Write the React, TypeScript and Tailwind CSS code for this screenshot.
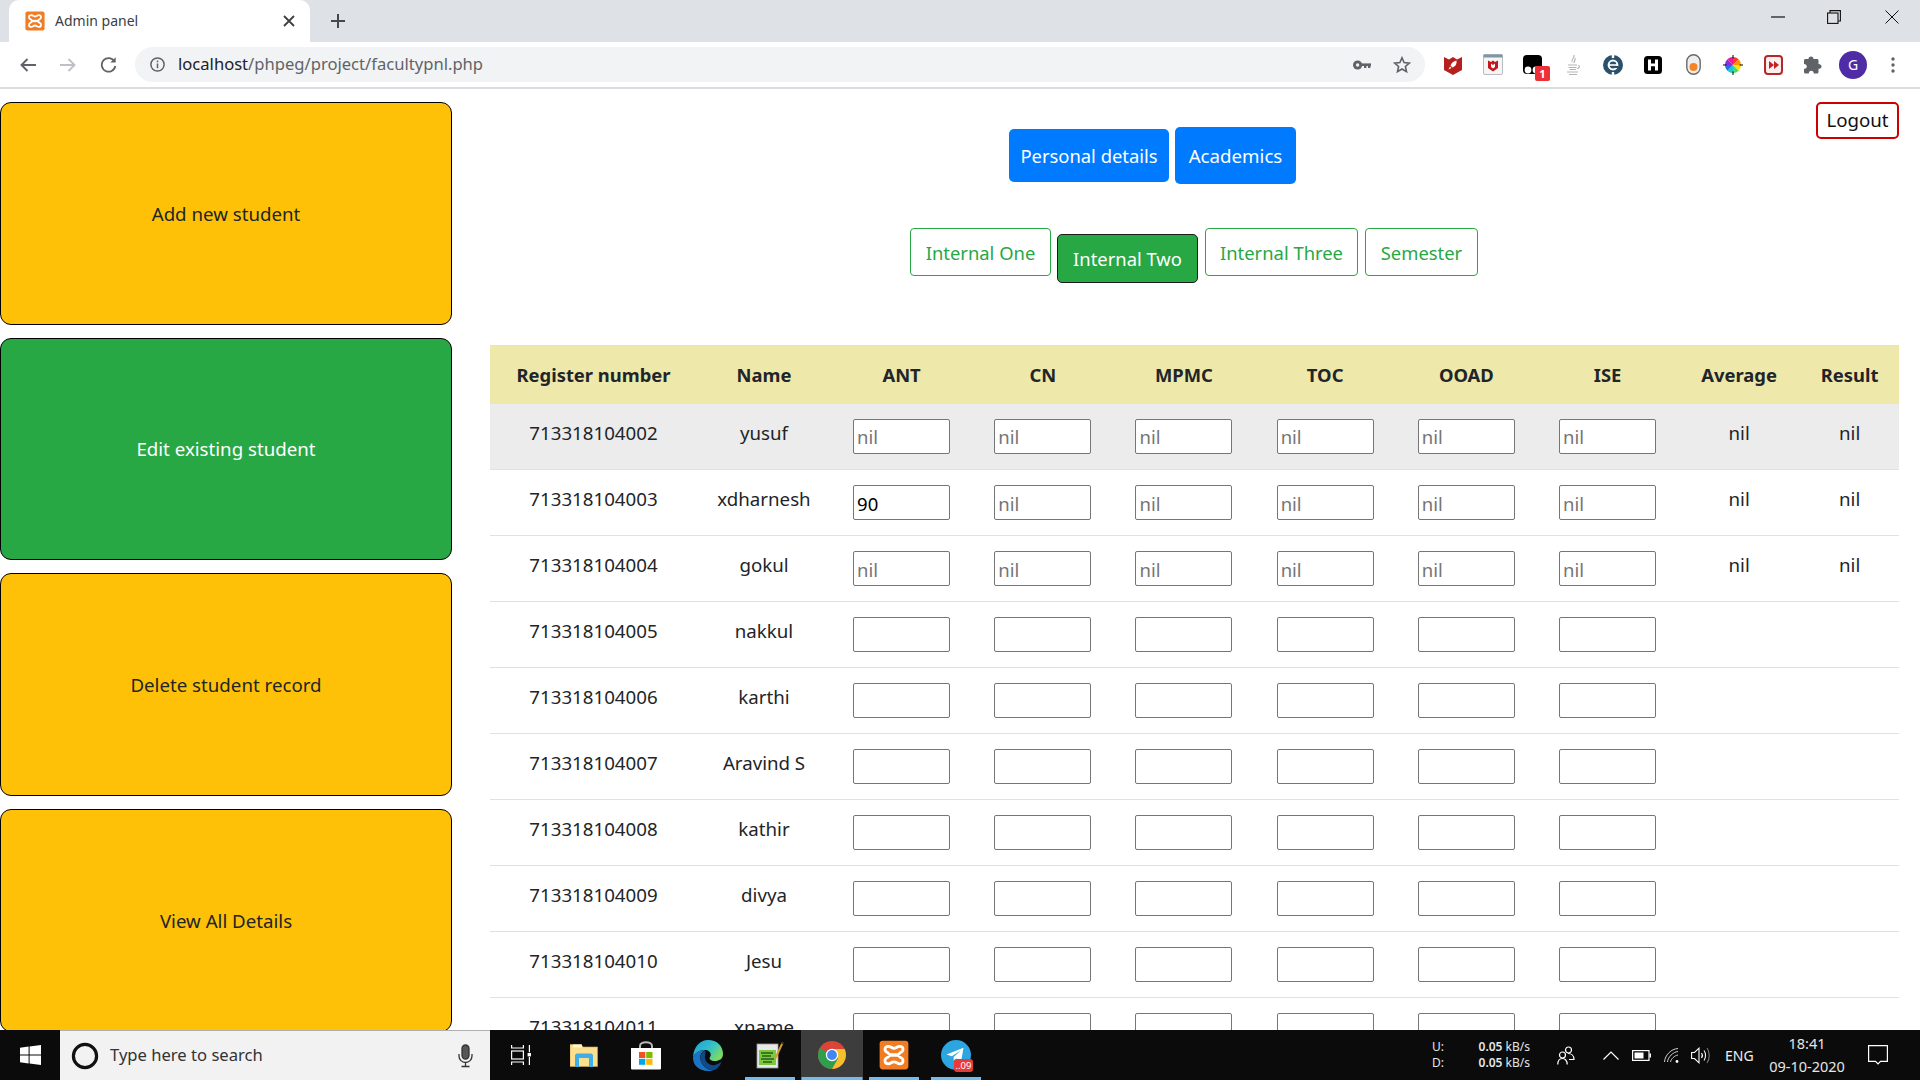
import React from "react";

const FONT = "[font-family:'Noto_Sans','Open_Sans',sans-serif]";

function Xampp({ size }: { size: number }) {
  return (
    <svg width={size} height={size} viewBox="0 0 24 24" className="block shrink-0">
      <rect x="0.5" y="0.5" width="23" height="23" rx="2.5" fill="#f27c22" />
      <path d="M7.5 5C9.5 5 10 6.6 12 6.6C14 6.6 14.5 5 16.5 5C20 5 20 9 17.2 10L15.2 12L17.2 14C20 15 20 19 16.5 19C14.5 19 14 17.4 12 17.4C10 17.4 9.5 19 7.5 19C4 19 4 15 6.8 14L8.8 12L6.8 10C4 9 4 5 7.5 5Z" fill="none" stroke="#fff" strokeWidth="2.2" />
      <rect x="8.5" y="10.6" width="7" height="2.8" fill="#fff" />
    </svg>
  );
}

function McAfee({ rocket }: { rocket?: boolean }) {
  return (
    <svg width="20" height="20" viewBox="0 0 20 20" className="block">
      <path d="M1 2L6 4.5L10 2L14 4.5L19 2V15L10 20L1 15Z" fill="#b5201f" />
      {rocket && <path d="M13.5 5.5C10.5 6 8.5 8 7.5 10.5L9.5 12.5C12 11.5 14 9.5 13.5 5.5ZM7 11.5L5.5 14.5L8.5 13Z" fill="#fff" />}
    </svg>
  );
}

const Ext: { key: string; node: React.ReactNode }[] = [
  { key: "m1", node: <McAfee rocket /> },
  {
    key: "m2",
    node: (
      <svg width="20" height="21" viewBox="0 0 20 21" className="block">
        <rect x="0.5" y="0.5" width="19" height="20" rx="1.5" fill="#f5f5f5" stroke="#b9bdc0" />
        <rect x="0.5" y="0.5" width="19" height="3" fill="#7f97a3" />
        <path d="M5 6.5L8 8L10 6.5L12 8L15 6.5V14L10 17.5L5 14Z" fill="#c4161c" />
        <path d="M8 9.5L10 11L12 9.5V13L10 14.5L8 13Z" fill="#fff" />
      </svg>
    ),
  },
  {
    key: "blk",
    node: (
      <div className="relative w-[20px] h-[20px]">
        <svg width="20" height="20" viewBox="0 0 20 20" className="block">
          <rect width="19" height="19" rx="4" fill="#000" />
          <circle cx="5" cy="15" r="3.4" fill="#fff" />
          <circle cx="13" cy="15" r="3.4" fill="#fff" />
        </svg>
        <div className={`absolute left-[12px] top-[11px] w-[15px] h-[15px] bg-[#ee2f37] rounded-[2px] text-white text-[11px] leading-[15px] font-bold text-center ${FONT}`}>1</div>
      </div>
    ),
  },
  {
    key: "java",
    node: (
      <svg width="16" height="22" viewBox="0 0 16 22" className="block" fill="none" stroke="#b5b5b5">
        <path d="M9 1C10 4 6 5 7 8M10 4C11 6 9 7 9 9" strokeWidth="1.2" />
        <path d="M3 11H12M3.5 13.5H11.5M4.5 15.5H11M13 11.5C15 11.5 15 14 12 14.5M2 18H13M4 20.5H12" strokeWidth="1.1" />
      </svg>
    ),
  },
  {
    key: "e",
    node: (
      <svg width="20" height="20" viewBox="0 0 20 20" className="block">
        <circle cx="10" cy="10" r="10" fill="#2b5069" />
        <rect x="8.8" y="0" width="2.4" height="3" fill="#fff" />
        <rect x="8.8" y="17" width="2.4" height="3" fill="#fff" />
        <circle cx="10" cy="10" r="4.4" fill="none" stroke="#fff" strokeWidth="2" />
        <rect x="6" y="9.2" width="8" height="1.6" fill="#fff" />
        <rect x="12" y="11" width="3" height="2" fill="#2b5069" />
      </svg>
    ),
  },
  {
    key: "H",
    node: (
      <svg width="18" height="18" viewBox="0 0 18 18" className="block">
        <rect width="18" height="18" rx="3.5" fill="#000" />
        <path d="M4 3.5H7V7.5H11V3.5H14V14.5H11V10.2H7V14.5H4Z" fill="#fff" />
      </svg>
    ),
  },
  {
    key: "toggle",
    node: (
      <svg width="15" height="21" viewBox="0 0 15 21" className="block">
        <rect x="0.8" y="0.8" width="13.4" height="19.4" rx="6.7" fill="#eeeeee" stroke="#6a6a6a" strokeWidth="1.4" />
        <circle cx="7.5" cy="13" r="4" fill="#f58426" />
      </svg>
    ),
  },
  {
    key: "wheel",
    node: (
      <svg width="20" height="20" viewBox="0 0 20 20" className="block">
        <path d="M10 10L10 2A8 8 0 0 1 15.66 4.34Z" fill="#ff3b30" />
        <path d="M10 10L15.66 4.34A8 8 0 0 1 18 10Z" fill="#ff9500" />
        <path d="M10 10L18 10A8 8 0 0 1 15.66 15.66Z" fill="#ffe600" />
        <path d="M10 10L15.66 15.66A8 8 0 0 1 10 18Z" fill="#4cd964" />
        <path d="M10 10L10 18A8 8 0 0 1 4.34 15.66Z" fill="#1cc8c8" />
        <path d="M10 10L4.34 15.66A8 8 0 0 1 2 10Z" fill="#1e6ff0" />
        <path d="M10 10L2 10A8 8 0 0 1 4.34 4.34Z" fill="#8a2be2" />
        <path d="M10 10L4.34 4.34A8 8 0 0 1 10 2Z" fill="#f0189a" />
        <path d="M10 0V3.5M10 16.5V20M0 10H3.5M16.5 10H20" stroke="#000" strokeWidth="1" />
      </svg>
    ),
  },
  {
    key: "ff",
    node: (
      <svg width="19" height="20" viewBox="0 0 19 20" className="block">
        <rect x="1" y="1" width="17" height="18" rx="3" fill="#fbeeee" stroke="#b4282a" strokeWidth="2" />
        <path d="M5 6L10 10L5 14ZM10 6L15 10L10 14Z" fill="#c0221f" />
      </svg>
    ),
  },
  {
    key: "puzzle",
    node: (
      <svg width="18" height="18" viewBox="0 0 18 18" className="block">
        <path d="M7 0.5C8.6 0.5 9.5 1.5 9.5 3H13C13.8 3 14.5 3.7 14.5 4.5V8C16.2 8 17.5 9 17.5 10.4C17.5 11.8 16.2 12.8 14.5 12.8V16C14.5 16.8 13.8 17.5 13 17.5H9.7C9.7 15.8 8.8 14.8 7.3 14.8C5.8 14.8 4.8 15.8 4.8 17.5H1.5C0.7 17.5 0 16.8 0 16V12.8C1.7 12.8 2.8 11.8 2.8 10.4C2.8 9 1.7 8 0 8V4.5C0 3.7 0.7 3 1.5 3H4.5C4.5 1.5 5.4 0.5 7 0.5Z" fill="#5f6368" />
      </svg>
    ),
  },
  {
    key: "avatar",
    node: <div className={`w-[28px] h-[28px] rounded-full bg-[#4f2ba6] text-white text-[14px] leading-[28px] text-center ${FONT}`}>G</div>,
  },
  {
    key: "dots",
    node: (
      <svg width="4" height="16" viewBox="0 0 4 16" className="block" fill="#5f6368">
        <circle cx="2" cy="2" r="1.7" />
        <circle cx="2" cy="8" r="1.7" />
        <circle cx="2" cy="14" r="1.7" />
      </svg>
    ),
  },
];

function BrowserChrome() {
  return (
    <div className="shrink-0">
      <div className="h-[42px] bg-[#dee1e6] flex items-end pl-[9px] relative">
        <div className="w-[301px] h-[42px] bg-white rounded-t-[10px] flex items-center pl-[16px] pr-[15px]">
          <Xampp size={20} />
          <span className={`ml-[10px] -mt-[2px] text-[14px] text-[#3c4043] ${FONT}`}>Admin panel</span>
          <svg width="12" height="12" viewBox="0 0 12 12" className="ml-auto" stroke="#3c4043" strokeWidth="1.8">
            <path d="M1 1L11 11M11 1L1 11" />
          </svg>
        </div>
        <svg width="16" height="16" viewBox="0 0 16 16" className="ml-[20px] mb-[13px]" stroke="#45494e" strokeWidth="2">
          <path d="M8 1V15M1 8H15" />
        </svg>
        <div className="ml-auto flex items-center h-[42px] pb-[8px]">
          <svg width="14" height="2" viewBox="0 0 14 2" className="mr-[42px]" stroke="#111" strokeWidth="1.2"><path d="M0 1H14" /></svg>
          <svg width="14" height="14" viewBox="0 0 14 14" className="mr-[44px]" fill="none" stroke="#111" strokeWidth="1.1">
            <rect x="0.6" y="3" width="10.4" height="10.4" />
            <path d="M3 3V0.6H13.4V11H11" />
          </svg>
          <svg width="14" height="14" viewBox="0 0 14 14" className="mr-[21px]" stroke="#111" strokeWidth="1"><path d="M0.5 0.5L13.5 13.5M13.5 0.5L0.5 13.5" /></svg>
        </div>
      </div>
      <div className="h-[45px] bg-white flex items-center pl-[8px]">
        <div className="w-[40px] flex justify-center">
          <svg width="16" height="14" viewBox="0 0 16 14" fill="none" stroke="#5f6368" strokeWidth="1.9"><path d="M16 7H2M7.5 1L1.5 7L7.5 13" /></svg>
        </div>
        <div className="w-[40px] flex justify-center">
          <svg width="16" height="14" viewBox="0 0 16 14" fill="none" stroke="#bdc0c4" strokeWidth="1.9"><path d="M0 7H14M8.5 1L14.5 7L8.5 13" /></svg>
        </div>
        <div className="w-[40px] flex justify-center">
          <svg width="17" height="17" viewBox="0 0 17 17" fill="none" stroke="#5f6368" strokeWidth="1.8">
            <path d="M14.5 5.5A6.8 6.8 0 1 0 15.3 10" />
            <path d="M15.7 1.2V6.6H10.3Z" fill="#5f6368" stroke="none" />
          </svg>
        </div>
        <div className="ml-[7px] w-[1290px] h-[35px] rounded-full bg-[#f1f3f4] flex items-center pl-[15px] pr-[14px]">
          <svg width="15" height="15" viewBox="0 0 15 15" fill="none" stroke="#5f6368" strokeWidth="1.5">
            <circle cx="7.5" cy="7.5" r="6.6" />
            <path d="M7.5 6.5V11.2M7.5 3.6V5.2" />
          </svg>
          <span className={`ml-[13px] text-[16.6px] ${FONT}`}>
            <span className="text-[#202124]">localhost</span>
            <span className="text-[#5f6368]">/phpeg/project/facultypnl.php</span>
          </span>
          <svg width="18" height="10" viewBox="0 0 18 10" className="ml-auto" fill="#5f6368">
            <circle cx="4.6" cy="5" r="4.6" />
            <rect x="8" y="3.4" width="10" height="2.6" />
            <rect x="11" y="5" width="2.4" height="3" />
            <rect x="15" y="5" width="2.4" height="3" />
            <circle cx="4.6" cy="5" r="1.7" fill="#f1f3f4" />
          </svg>
          <svg width="18" height="18" viewBox="0 0 18 18" className="ml-[22px]" fill="none" stroke="#5f6368" strokeWidth="1.6">
            <path d="M9 1.8L11.1 6.6L16.3 7.1L12.4 10.5L13.5 15.6L9 13L4.5 15.6L5.6 10.5L1.7 7.1L6.9 6.6Z" />
          </svg>
        </div>
        <div className="ml-[8px] flex items-center">
          {Ext.map((e) => (
            <div key={e.key} className="w-[40px] flex justify-center items-center">{e.node}</div>
          ))}
        </div>
      </div>
      <div className="h-[2px] bg-[#dadce0]" />
    </div>
  );
}

const sidebar = [
  { t: "Add new student", on: false },
  { t: "Edit existing student", on: true },
  { t: "Delete student record", on: false },
  { t: "View All Details", on: false },
];

const rows = [
  ["713318104002", "yusuf", "nil"],
  ["713318104003", "xdharnesh", "nil"],
  ["713318104004", "gokul", "nil"],
  ["713318104005", "nakkul", ""],
  ["713318104006", "karthi", ""],
  ["713318104007", "Aravind S", ""],
  ["713318104008", "kathir", ""],
  ["713318104009", "divya", ""],
  ["713318104010", "Jesu", ""],
  ["713318104011", "xname", ""],
];

const th = "font-bold text-[#212529] text-[18.4px] text-center align-middle p-0";
const td = "text-center align-top pt-[15px] text-[#212529] text-[18.7px]";

function MarksTable() {
  return (
    <table className="w-[1409.2px] table-fixed border-collapse">
      <thead>
        <tr className="h-[58px] bg-[#eee8aa] border-t border-[#dee2e6]">
          <th className={`${th} w-[207px]`}>Register number</th>
          <th className={`${th} w-[134px]`}>Name</th>
          <th className={`${th} w-[141.2px]`}>ANT</th>
          <th className={`${th} w-[141.2px]`}>CN</th>
          <th className={`${th} w-[141.2px]`}>MPMC</th>
          <th className={`${th} w-[141.2px]`}>TOC</th>
          <th className={`${th} w-[141.2px]`}>OOAD</th>
          <th className={`${th} w-[141.2px]`}>ISE</th>
          <th className={`${th} w-[122px]`}>Average</th>
          <th className={`${th} w-[99px]`}>Result</th>
        </tr>
      </thead>
      <tbody>
        {rows.map((r, i) => (
          <tr key={r[0]} className={`h-[66px] border-b border-[#dee2e6] ${i === 0 ? "bg-[#ececec]" : "bg-white"}`}>
            <td className={td}>{r[0]}</td>
            <td className={td}>{r[1]}</td>
            {[0, 1, 2, 3, 4, 5].map((c) => (
              <td key={c} className="align-top pt-[15px] text-center">
                <input
                  defaultValue={i === 1 && c === 0 ? "90" : ""}
                  placeholder={r[2]}
                  className={`w-[97px] h-[35px] bg-white border border-[#767676] rounded-[2px] pl-[3px] pt-[1px] text-[18.5px] text-black placeholder:text-[#757575] outline-none ${FONT}`}
                />
              </td>
            ))}
            <td className={td}>{r[2]}</td>
            <td className={td}>{r[2]}</td>
          </tr>
        ))}
      </tbody>
    </table>
  );
}

function Page() {
  return (
    <main className={`flex-1 min-h-0 overflow-hidden flex bg-white relative ${FONT}`}>
      <aside className="w-[452px] shrink-0 flex flex-col gap-[12.8px] pt-[13px]">
        {sidebar.map((s) => (
          <div
            key={s.t}
            className={`w-[452px] h-[222.8px] shrink-0 pt-[1px] rounded-[11px] border border-black flex items-center justify-center text-[18.7px] ${s.on ? "bg-[#28a745] text-white" : "bg-[#ffc107] text-[#212529]"}`}
          >
            {s.t}
          </div>
        ))}
      </aside>
      <section className="ml-[38px] w-[1411px] shrink-0">
        <div className="pt-[38px] pl-[519px] h-[95px] flex items-center">
          <div className="w-[160px] h-[53px] pt-[1px] bg-[#007bff] rounded-[5px] text-white text-[18.4px] flex items-center justify-center">Personal details</div>
          <div className="ml-[6px] w-[121px] h-[57px] pt-[1px] bg-[#007bff] rounded-[5px] text-white text-[18.7px] flex items-center justify-center">Academics</div>
        </div>
        <div className="mt-[44px] h-[55px] flex justify-center items-start pr-[3px] text-[18.4px]">
          <div className="w-[141px] h-[48px] pt-[1px] border border-[#28a745] rounded-[4px] text-[#28a745] flex items-center justify-center">Internal One</div>
          <div className="ml-[6px] mt-[6px] w-[141px] h-[49px] pt-[1px] bg-[#28a745] border border-[#1c1c1c] rounded-[5px] text-white flex items-center justify-center">Internal Two</div>
          <div className="ml-[7px] w-[153px] h-[48px] pt-[1px] border border-[#28a745] rounded-[4px] text-[#28a745] flex items-center justify-center">Internal Three</div>
          <div className="ml-[7px] w-[113px] h-[48px] pt-[1px] border border-[#28a745] rounded-[4px] text-[#28a745] flex items-center justify-center">Semester</div>
        </div>
        <div className="mt-[62px]">
          <MarksTable />
        </div>
      </section>
      <div className="absolute left-[1816px] top-[13px] w-[83px] h-[37px] border-2 border-[#cc0000] rounded-[5px] text-[#111] text-[18.7px] flex items-center justify-center bg-white">Logout</div>
    </main>
  );
}

function Slot({ children, active, line, lineW }: { children: React.ReactNode; active?: boolean; line?: boolean; lineW?: string }) {
  return (
    <div className={`w-[62px] h-[50px] flex items-center justify-center relative ${active ? "bg-[#3d3d3d]" : ""}`}>
      {children}
      {line && <div className={`absolute bottom-0 left-1/2 -translate-x-1/2 h-[3px] bg-[#76b9ed] ${lineW ?? "w-[50px]"}`} />}
    </div>
  );
}

function Taskbar() {
  return (
    <footer className={`h-[50px] shrink-0 bg-[#0b0b0b] flex items-center ${FONT}`}>
      <div className="w-[60px] flex justify-center">
        <svg width="21" height="20" viewBox="0 0 21 20" fill="#fff">
          <path d="M0 2.8L8.6 1.6V9.5H0ZM9.6 1.5L21 0V9.5H9.6ZM0 10.5H8.6V18.4L0 17.2ZM9.6 10.5H21V20L9.6 18.5Z" />
        </svg>
      </div>
      <div className="w-[430px] h-[50px] bg-[#f2f2f2] border-t border-[#b0b0b0] flex items-center pl-[11px] pr-[17px]">
        <svg width="28" height="28" viewBox="0 0 28 28" fill="none" stroke="#111" strokeWidth="3.2">
          <circle cx="14" cy="14" r="11.6" />
        </svg>
        <span className="ml-[11px] text-[16.6px] text-[#333]">Type here to search</span>
        <svg width="15" height="24" viewBox="0 0 15 24" className="ml-auto" fill="none" stroke="#333" strokeWidth="1.3">
          <rect x="4" y="1" width="7" height="14" rx="3.5" fill="#555" />
          <path d="M1 10V12A6.5 6.5 0 0 0 14 12V10M7.5 18.5V22M3.5 22.5H11.5" />
        </svg>
      </div>
      <div className="ml-[1px]" />
      <Slot>
        <svg width="20" height="20" viewBox="0 0 20 20" fill="none" stroke="#fff" strokeWidth="1.2" className="-ml-[2px]">
          <path d="M0.6 0V3H12.4V0M0.6 20V17H12.4V20" />
          <rect x="0.6" y="6" width="11.8" height="8" />
          <path d="M18.4 0V7.2M18.4 12V20" />
          <rect x="16.6" y="8" width="3.4" height="3.4" fill="#fff" stroke="none" />
        </svg>
      </Slot>
      <Slot>
        <svg width="28" height="24" viewBox="0 0 28 24">
          <path d="M0 1.5H11L13 4H27.5V23.5H0Z" fill="#fbdf8d" stroke="#c9a84e" strokeWidth="0.6" />
          <rect x="3" y="1.5" width="9" height="3" fill="#fff6d0" />
          <path d="M5 24V12.5C5 11.5 6 10.5 7 10.5H21C22 10.5 23 11.5 23 12.5V24H19V15H9V24Z" fill="#3eaee8" />
        </svg>
      </Slot>
      <Slot>
        <svg width="30" height="30" viewBox="0 0 30 30">
          <path d="M9 9V6C9 1 21 1 21 6V9" fill="none" stroke="#b8b8b8" strokeWidth="2" />
          <path d="M0 8H30V28.5Q30 29.5 29 29.5H1Q0 29.5 0 28.5Z" fill="#fff" />
          <rect x="8" y="12" width="6.3" height="6" fill="#f25022" />
          <rect x="15.2" y="12" width="6.3" height="6" fill="#7fba00" />
          <rect x="8" y="18.8" width="6.3" height="6" fill="#00a4ef" />
          <rect x="15.2" y="18.8" width="6.3" height="6" fill="#ffb900" />
        </svg>
      </Slot>
      <Slot>
        <svg width="30" height="31" viewBox="0 0 30 31">
          <defs>
            <linearGradient id="eg" x1="0" y1="0" x2="1" y2="0.6">
              <stop offset="0" stopColor="#1b9de2" />
              <stop offset="0.6" stopColor="#35c1c6" />
              <stop offset="1" stopColor="#7cdb62" />
            </linearGradient>
          </defs>
          <path d="M15 0C24 0 30 6 30 14C30 19 26 21 22 21C18 21 15.5 19 17 17C19 14.5 17 10.5 13 10C7 9.5 2 13 0 17C0.5 7 7 0 15 0Z" fill="url(#eg)" />
          <path d="M0 17C2 13 7 9.5 12 10.5C8 12 6.5 16 7.5 20C8.5 25 13 29.5 20 30.5C19 31 17 31 15 31C6 31 -0.5 25 0 17Z" fill="#1a74c4" />
          <path d="M7.5 20C6.5 16 9 12 12 11C13.5 11 11.5 15 12 18C12.5 23 18 26 22 25C25 24.2 27 23 28.5 22C26.5 27 23.5 29.5 20 30.5C13 29.5 8.5 25 7.5 20Z" fill="#114a8b" />
        </svg>
      </Slot>
      <Slot line>
        <svg width="28" height="28" viewBox="0 0 28 28">
          <rect x="1" y="3" width="21" height="24" fill="#e8e8e8" stroke="#999" strokeWidth="0.8" />
          <rect x="3" y="9" width="17" height="15" fill="#7ac943" />
          <path d="M5 12H17M6 15H15M5 18H18M7 21H16" stroke="#2c5e12" strokeWidth="1.4" />
          <path d="M19 18L26.5 2" stroke="#d49b2a" strokeWidth="2" />
          <path d="M25.5 1.5L27.5 2.5" stroke="#333" strokeWidth="2" />
        </svg>
      </Slot>
      <Slot active line lineW="w-[61px]">
        <svg width="28" height="28" viewBox="0 0 28 28">
          <circle cx="14" cy="14" r="14" fill="#db4437" />
          <path d="M14 14L1.9 7A14 14 0 0 0 14 28L20 17.5Z" fill="#2e9e4f" />
          <path d="M14 8H26.6A14 14 0 0 1 14 28L20 17.5Z" fill="#f5c02c" />
          <circle cx="14" cy="14" r="6.2" fill="#fff" />
          <circle cx="14" cy="14" r="4.9" fill="#4285f4" />
        </svg>
      </Slot>
      <Slot line>
        <Xampp size={30} />
      </Slot>
      <Slot line>
        <div className="relative w-[30px] h-[30px]">
          <svg width="30" height="30" viewBox="0 0 30 30" className="block">
            <circle cx="15" cy="15" r="15" fill="#2ca5e0" />
            <path d="M5.5 14.5L22.5 7.8L20 22L15.2 18.6L12.8 20.8L12.6 17L19.8 10.6L10.8 16.2Z" fill="#fff" />
          </svg>
          <div className="absolute left-[13px] top-[19px] w-[19px] h-[13px] bg-[#e93a3a] rounded-[3px] text-white text-[9.5px] leading-[13px] text-center">..09</div>
        </div>
      </Slot>

      <div className="ml-[445px] w-[98px] text-[12px] text-[#e6e6e6] leading-[16px]">
        <div className="flex justify-between"><span>U:</span><span><span className="font-semibold">0.05</span> kB/s</span></div>
        <div className="flex justify-between"><span>D:</span><span><span className="font-semibold">0.05</span> kB/s</span></div>
      </div>
      <svg width="18" height="19" viewBox="0 0 18 19" className="ml-[27px]" fill="none" stroke="#fff" strokeWidth="1.2">
        <circle cx="11.5" cy="4" r="3" />
        <circle cx="5.5" cy="9" r="3" />
        <path d="M0.8 18.5C0.8 14.5 3 12.5 5.5 12.5C8 12.5 10.2 14.5 10.2 18.5M11 7.5C14 7.5 17 9.5 17 13.5H12" />
      </svg>
      <svg width="16" height="9" viewBox="0 0 16 9" className="ml-[28px]" fill="none" stroke="#fff" strokeWidth="1.2"><path d="M0.5 8.5L8 1L15.5 8.5" /></svg>
      <svg width="19" height="11" viewBox="0 0 19 11" className="ml-[13px]">
        <rect x="0.6" y="0.6" width="16.4" height="9.8" fill="none" stroke="#fff" strokeWidth="1.2" />
        <rect x="2.5" y="2.5" width="9" height="6" fill="#fff" />
        <rect x="17.5" y="3.5" width="1.5" height="4" fill="#fff" />
      </svg>
      <svg width="15" height="15" viewBox="0 0 15 15" className="ml-[13px]" fill="none" stroke="#cfcfcf" strokeWidth="1">
        <path d="M0.5 14C1 7 7 1 14 0.5M3.5 14C4 9 9 4 14 3.5M6.5 14C7 11 10.5 7.5 14 7" />
        <circle cx="13" cy="13.5" r="1.4" fill="#fff" stroke="none" />
      </svg>
      <svg width="20" height="17" viewBox="0 0 20 17" className="ml-[12px]" fill="none" stroke="#fff" strokeWidth="1.1">
        <path d="M0.6 5.5H3.5L8 1.2V15.8L3.5 11.5H0.6Z" />
        <path d="M10.5 6C11.5 7.3 11.5 9.7 10.5 11" />
        <path d="M13 3.5C15 6 15 11 13 13.5" />
        <path d="M16 1C19 5 19 12 16 16" stroke="#777" />
      </svg>
      <span className="ml-[14px] w-[27px] text-[14px] text-[#eee] whitespace-nowrap">ENG</span>
      <div className="ml-[17px] w-[76px] text-center text-[14.5px] text-[#e6e6e6] leading-[23px] whitespace-nowrap">
        <div>18:41</div>
        <div>09-10-2020</div>
      </div>
      <svg width="20" height="20" viewBox="0 0 20 20" className="ml-[23px]" fill="none" stroke="#fff" strokeWidth="1.2">
        <path d="M0.6 0.6H19.4V16.4H12.5L10 19L7.5 16.4H0.6Z" />
      </svg>
    </footer>
  );
}

export default function App() {
  return (
    <div className={`w-[1920px] h-[1080px] overflow-hidden flex flex-col ${FONT}`}>
      <BrowserChrome />
      <Page />
      <Taskbar />
    </div>
  );
}
